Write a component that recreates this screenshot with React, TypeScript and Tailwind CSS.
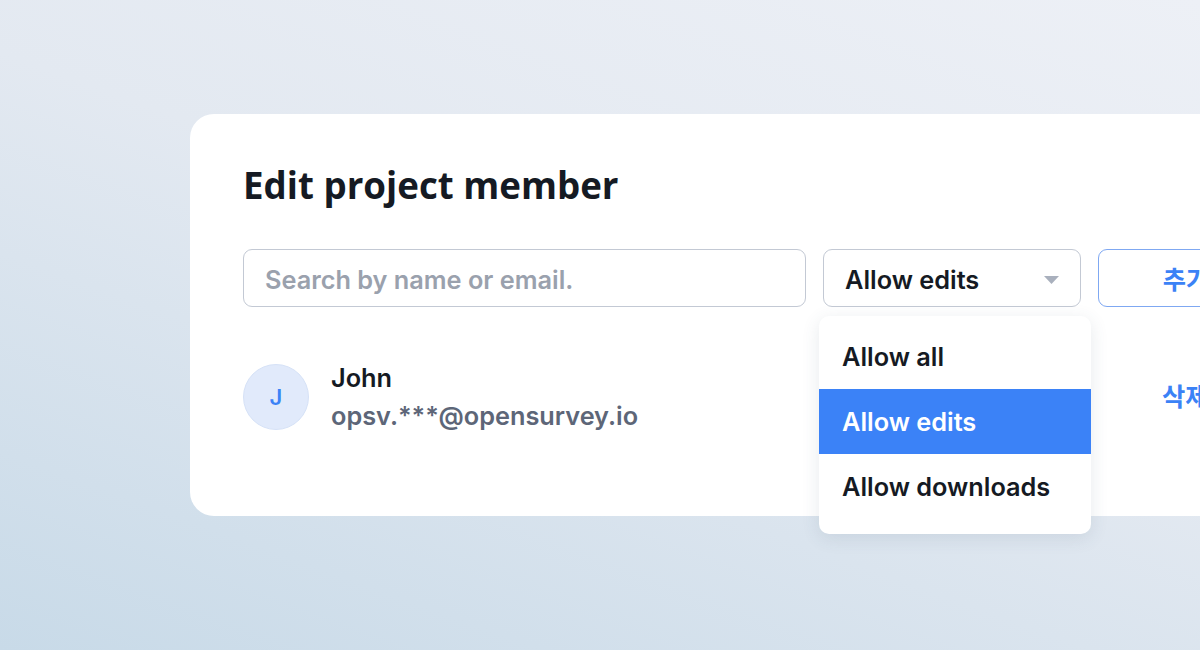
import { useState } from "react";

const options = ["Allow all", "Allow edits", "Allow downloads"];

function Caret() {
  return (
    <svg width="15" height="8" viewBox="0 0 15 8" className="shrink-0">
      <path d="M0 0h15L7.5 8z" fill="#a9b0bd" />
    </svg>
  );
}

export default function App() {
  const [selected] = useState("Allow edits");
  const inter = { fontFamily: "Inter, 'Noto Sans CJK KR', sans-serif" };

  return (
    <main
      className="w-[1200px] h-[650px] overflow-hidden pl-[190px] pt-[114px] bg-[linear-gradient(200deg,#edf0f6_0%,#e3e9f1_45%,#c8dae8_100%)]"
      style={inter}
    >
      <div className="w-[1100px] h-[402px] bg-white rounded-[24px] pt-[49px] pl-[53px]">
        <h1
          className="text-[36.7px] leading-[44px] font-bold text-[#151a23]"
          style={{ fontFamily: "'Open Sans', 'Noto Sans', sans-serif" }}
        >
          Edit project member
        </h1>

        <div className="flex gap-[17px] mt-[42px]">
          <div className="w-[563px] h-[58px] rounded-[9px] border-[1.5px] border-[#c3c9d4] flex items-center px-[21px] pt-[3px]">
            <span className="text-[25.3px] font-semibold text-[#9aa1ad]">Search by name or email.</span>
          </div>

          <div className="relative">
            <div className="w-[258px] h-[58px] rounded-[9px] border-[1.5px] border-[#c3c9d4] flex items-center justify-between pl-[21px] pr-[21px] pt-[3px]">
              <span className="text-[25.3px] font-semibold text-[#151a23]">{selected}</span>
              <Caret />
            </div>

            <ul className="absolute left-[-4px] top-[67px] w-[272px] bg-white rounded-[10px] pt-[8px] pb-[15px] shadow-[0_4px_18px_rgba(60,80,110,0.12)] z-10">
              {options.map((o) => (
                <li
                  key={o}
                  className={
                    o === selected
                      ? "h-[65px] flex items-center pl-[23px] bg-[#3b82f7] text-white text-[25.3px] font-semibold"
                      : "h-[65px] flex items-center pl-[23px] text-[#151a23] text-[25.3px] font-semibold"
                  }
                >
                  {o}
                </li>
              ))}
            </ul>
          </div>

          <button className="w-[176px] shrink-0 h-[58px] rounded-[9px] border-[1.5px] border-[#7fa8f2] text-[#3b82f6] text-[25.3px] font-semibold pt-[3px]">
            추가
          </button>
        </div>

        <div className="flex items-center mt-[52px]">
          <div className="w-[919px] shrink-0 flex items-center">
            <div className="w-[66px] h-[66px] rounded-full bg-[#e1eafb] border border-[#d6e2f7] flex items-center justify-center text-[#3b82f6] text-[22px] font-semibold">
              J
            </div>
            <div className="ml-[22px] flex flex-col">
              <span className="text-[25.3px] leading-[38px] font-semibold text-[#151a23]">John</span>
              <span className="text-[25.3px] leading-[38px] font-semibold text-[#5d6678]">opsv.***@opensurvey.io</span>
            </div>
          </div>
          <button className="shrink-0 text-[25.3px] font-semibold text-[#3b82f6] whitespace-nowrap">삭제</button>
        </div>
      </div>
    </main>
  );
}
